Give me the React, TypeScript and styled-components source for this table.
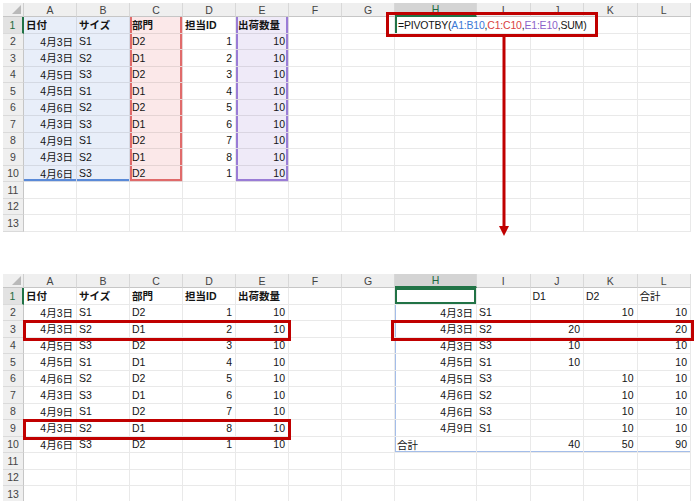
import React from 'react';
import styled, { createGlobalStyle } from 'styled-components';

const GlobalStyle = createGlobalStyle`
  html, body { margin: 0; padding: 0; background: #ffffff; overflow: hidden; }
  body {
    font-family: "Liberation Sans", "Noto Sans CJK JP", sans-serif;
    font-size: 10.5px;
    color: #141414;
  }
`;

const LETTERS = ['A', 'B', 'C', 'D', 'E', 'F', 'G', 'H', 'I', 'J', 'K', 'L'];
const COL_W = [53, 53, 53, 53, 53, 53, 53, 82, 53.5, 53.5, 53.5, 53.5];
const ROWHEAD_W = 21;
const HEAD_H = 14;
const ROW_H = 16.5;
const NROWS = 13;

const colLeft = (c: number) => ROWHEAD_W + COL_W.slice(0, c).reduce((a, b) => a + b, 0);
const colRight = (c: number) => colLeft(c) + COL_W[c];
const rowTop = (r: number) => HEAD_H + (r - 1) * ROW_H;

type Align = 'left' | 'right';
type Tint = 'blue' | 'red' | 'purple';
interface Frame {
  color: string;
  sides: string;
  w?: number;
}
interface CellSpec {
  text?: React.ReactNode;
  align?: Align;
  bold?: boolean;
  tint?: Tint;
  span?: number;
  frames?: Frame[];
}

const TINTS: Record<Tint, string> = { blue: '#e8eef9', red: '#fbe8e9', purple: '#efeaf8' };
const FRAME_COLORS: Record<Tint, string> = { blue: '#5a8ad8', red: '#e06a6a', purple: '#9a7cd6' };
const GREEN = '#217346';
const CALLOUT = '#c00000';
const SPILL = '#a3bde9';

const shadowOf = (frames?: Frame[]) => {
  if (!frames || frames.length === 0) return 'none';
  const parts: string[] = [];
  frames.forEach((f) => {
    const w = f.w ?? 2;
    if (f.sides.includes('l')) parts.push(`inset ${w}px 0 0 ${f.color}`);
    if (f.sides.includes('r')) parts.push(`inset -${w}px 0 0 ${f.color}`);
    if (f.sides.includes('t')) parts.push(`inset 0 ${w}px 0 ${f.color}`);
    if (f.sides.includes('b')) parts.push(`inset 0 -${w}px 0 ${f.color}`);
  });
  return parts.join(', ');
};

const Page = styled.div`
  position: relative;
  width: 700px;
  height: 501px;
  box-sizing: border-box;
  padding: 3px 0 0 3px;
  display: flex;
  flex-direction: column;
  gap: 42.5px;
  overflow: hidden;
`;

const Sheet = styled.div`
  position: relative;
  display: grid;
  grid-template-columns: ${ROWHEAD_W}px ${COL_W.map((w) => `${w}px`).join(' ')};
  grid-template-rows: ${HEAD_H}px repeat(${NROWS}, ${ROW_H}px);
  width: ${colRight(11)}px;
  flex: none;
`;

const Corner = styled.div`
  position: relative;
  background: #efefef;
  border-right: 1px solid #cfcfcf;
  border-bottom: 1px solid #c6c6c6;
  box-sizing: border-box;
  &::after {
    content: '';
    position: absolute;
    right: 2px;
    bottom: 2px;
    width: 9px;
    height: 9px;
    background: #b9b9b9;
    clip-path: polygon(100% 0, 100% 100%, 0 100%);
  }
`;

const ColHead = styled.div<{ $active?: boolean }>`
  box-sizing: border-box;
  display: flex;
  align-items: center;
  justify-content: center;
  background: ${(p) => (p.$active ? '#d4d4d4' : '#efefef')};
  color: ${(p) => (p.$active ? '#1d6b40' : '#444444')};
  border-right: 1px solid #d8d8d8;
  border-bottom: ${(p) => (p.$active ? `2px solid ${GREEN}` : '1px solid #c6c6c6')};
  font-size: 10.5px;
`;

const RowHead = styled.div<{ $active?: boolean }>`
  box-sizing: border-box;
  display: flex;
  align-items: center;
  justify-content: center;
  background: ${(p) => (p.$active ? '#e2e2e2' : '#efefef')};
  color: ${(p) => (p.$active ? '#1d6b40' : '#444444')};
  border-right: ${(p) => (p.$active ? `2px solid ${GREEN}` : '1px solid #c6c6c6')};
  border-bottom: 1px solid #dadada;
  font-size: 10.5px;
`;

const Cell = styled.div<{ $align?: Align; $bold?: boolean; $tint?: Tint; $span?: number; $shadow: string }>`
  box-sizing: border-box;
  min-width: 0;
  display: flex;
  align-items: center;
  justify-content: ${(p) => (p.$align === 'right' ? 'flex-end' : 'flex-start')};
  padding: 0 3px 0 2px;
  white-space: nowrap;
  overflow: hidden;
  background: ${(p) => (p.$tint ? TINTS[p.$tint] : 'transparent')};
  border-right: 1px solid rgba(0, 0, 0, 0.085);
  border-bottom: 1px solid rgba(0, 0, 0, 0.085);
  font-weight: ${(p) => (p.$bold ? 700 : 400)};
  grid-column: ${(p) => (p.$span ? `span ${p.$span}` : 'auto')};
  box-shadow: ${(p) => p.$shadow};
`;

const FormulaText = styled.span`
  padding-left: 1px;
  letter-spacing: -0.2px;
`;

const Ref = styled.span<{ $tone: 'blue' | 'red' | 'purple' }>`
  color: ${(p) => (p.$tone === 'blue' ? '#3a78d6' : p.$tone === 'red' ? '#d9413f' : '#8b63c9')};
`;

interface BoxProps {
  $x: number;
  $y: number;
  $w: number;
  $h: number;
}

const Callout = styled.div<BoxProps>`
  position: absolute;
  box-sizing: border-box;
  pointer-events: none;
  left: ${(p) => p.$x}px;
  top: ${(p) => p.$y}px;
  width: ${(p) => p.$w}px;
  height: ${(p) => p.$h}px;
  border: 3px solid ${CALLOUT};
`;

const ArrowSvg = styled.svg`
  position: absolute;
  left: 499px;
  top: 37px;
  width: 10px;
  height: 199px;
  overflow: visible;
`;

const SRC: string[][] = [
  ['4月3日', 'S1', 'D2', '1', '10'],
  ['4月3日', 'S2', 'D1', '2', '10'],
  ['4月5日', 'S3', 'D2', '3', '10'],
  ['4月5日', 'S1', 'D1', '4', '10'],
  ['4月6日', 'S2', 'D2', '5', '10'],
  ['4月3日', 'S3', 'D1', '6', '10'],
  ['4月9日', 'S1', 'D2', '7', '10'],
  ['4月3日', 'S2', 'D1', '8', '10'],
  ['4月6日', 'S3', 'D2', '1', '10'],
];
const SRC_HEAD = ['日付', 'サイズ', '部門', '担当ID', '出荷数量'];
const SRC_ALIGN: Align[] = ['right', 'left', 'left', 'right', 'right'];
const SRC_TINT: (Tint | undefined)[] = ['blue', 'blue', 'red', undefined, 'purple'];

const PIVOT: string[][] = [
  ['4月3日', 'S1', '', '10', '10'],
  ['4月3日', 'S2', '20', '', '20'],
  ['4月3日', 'S3', '10', '', '10'],
  ['4月5日', 'S1', '10', '', '10'],
  ['4月5日', 'S3', '', '10', '10'],
  ['4月6日', 'S2', '', '10', '10'],
  ['4月6日', 'S3', '', '10', '10'],
  ['4月9日', 'S1', '', '10', '10'],
];
const PIVOT_ALIGN: Align[] = ['right', 'left', 'right', 'right', 'right'];

const empty = (n: number): CellSpec[] => Array.from({ length: n }, () => ({}));

function rangeFrame(tint: Tint | undefined, r: number): Frame[] | undefined {
  if (!tint || r > 10) return undefined;
  const color = FRAME_COLORS[tint];
  let sides = tint === 'blue' ? '' : 'lr';
  if (r === 10) sides += 'b';
  return sides ? [{ color, sides }] : undefined;
}

function sourceCells(r: number, tinted: boolean): CellSpec[] {
  const base: CellSpec[] = [];
  for (let c = 0; c < 5; c++) {
    const tint = tinted && r <= 10 ? SRC_TINT[c] : undefined;
    const frames = tinted ? rangeFrame(tint, r) : undefined;
    if (r === 1) base.push({ text: SRC_HEAD[c], bold: true, tint, frames });
    else if (r <= 10) base.push({ text: SRC[r - 2][c], align: SRC_ALIGN[c], tint, frames });
    else base.push({});
  }
  return [...base, ...empty(2)];
}

const Formula = () => (
  <FormulaText>
    =PIVOTBY(<Ref $tone="blue">A1:B10</Ref>,<Ref $tone="red">C1:C10</Ref>,<Ref $tone="purple">E1:E10</Ref>,SUM)
  </FormulaText>
);

function topRows(): CellSpec[][] {
  const rows: CellSpec[][] = [];
  for (let r = 1; r <= NROWS; r++) {
    const right: CellSpec[] =
      r === 1 ? [{ text: <Formula />, span: 4, frames: [{ color: GREEN, sides: 'l' }] }, {}] : empty(5);
    rows.push([...sourceCells(r, true), ...right]);
  }
  return rows;
}

function spillFrames(r: number, i: number): Frame[] | undefined {
  if (r === 1 && i === 0) return [{ color: GREEN, sides: 'lrtb' }];
  if (r > 10) return undefined;
  let sides = '';
  if (i === 0) sides += 'l';
  if (r === 10) sides += 'b';
  return sides ? [{ color: SPILL, sides, w: 1 }] : undefined;
}

function bottomRows(): CellSpec[][] {
  const rows: CellSpec[][] = [];
  for (let r = 1; r <= NROWS; r++) {
    let right: CellSpec[];
    if (r === 1) right = [{}, {}, { text: 'D1' }, { text: 'D2' }, { text: '合計' }];
    else if (r <= 9) right = PIVOT[r - 2].map((t, i) => ({ text: t, align: PIVOT_ALIGN[i] }));
    else if (r === 10)
      right = [{ text: '合計' }, {}, { text: '40', align: 'right' }, { text: '50', align: 'right' }, { text: '90', align: 'right' }];
    else right = empty(5);
    right = right.map((c, i) => ({ ...c, frames: spillFrames(r, i) }));
    rows.push([...sourceCells(r, false), ...right]);
  }
  return rows;
}

const SheetGrid: React.FC<{ rows: CellSpec[][]; children?: React.ReactNode }> = ({ rows, children }) => (
  <Sheet>
    <Corner />
    {LETTERS.map((l) => (
      <ColHead key={l} $active={l === 'H'}>
        {l}
      </ColHead>
    ))}
    {rows.map((cells, i) => (
      <React.Fragment key={i}>
        <RowHead $active={i === 0}>{i + 1}</RowHead>
        {cells.map((c, j) => (
          <Cell key={j} $align={c.align} $bold={c.bold} $tint={c.tint} $span={c.span} $shadow={shadowOf(c.frames)}>
            {c.text}
          </Cell>
        ))}
      </React.Fragment>
    ))}
    {children}
  </Sheet>
);

export default function App() {
  const leftRow = (r: number) => ({
    $x: colLeft(0) - 1.5,
    $y: rowTop(r) - 1,
    $w: colRight(4) - colLeft(0) + 3,
    $h: ROW_H + 4,
  });
  return (
    <>
      <GlobalStyle />
      <Page>
        <SheetGrid rows={topRows()}>
          <Callout $x={383} $y={9} $w={212} $h={25} />
        </SheetGrid>
        <SheetGrid rows={bottomRows()}>
          <Callout {...leftRow(3)} />
          <Callout {...leftRow(9)} />
          <Callout
            $x={colLeft(7) - 4}
            $y={rowTop(3) - 1}
            $w={colRight(11) - colLeft(7) + 7}
            $h={ROW_H + 4}
          />
        </SheetGrid>
        <ArrowSvg viewBox="0 0 10 199">
          <line x1="5" y1="0" x2="5" y2="190" stroke={CALLOUT} strokeWidth="3" />
          <polygon points="0,189 10,189 5,199" fill={CALLOUT} />
        </ArrowSvg>
      </Page>
    </>
  );
}
